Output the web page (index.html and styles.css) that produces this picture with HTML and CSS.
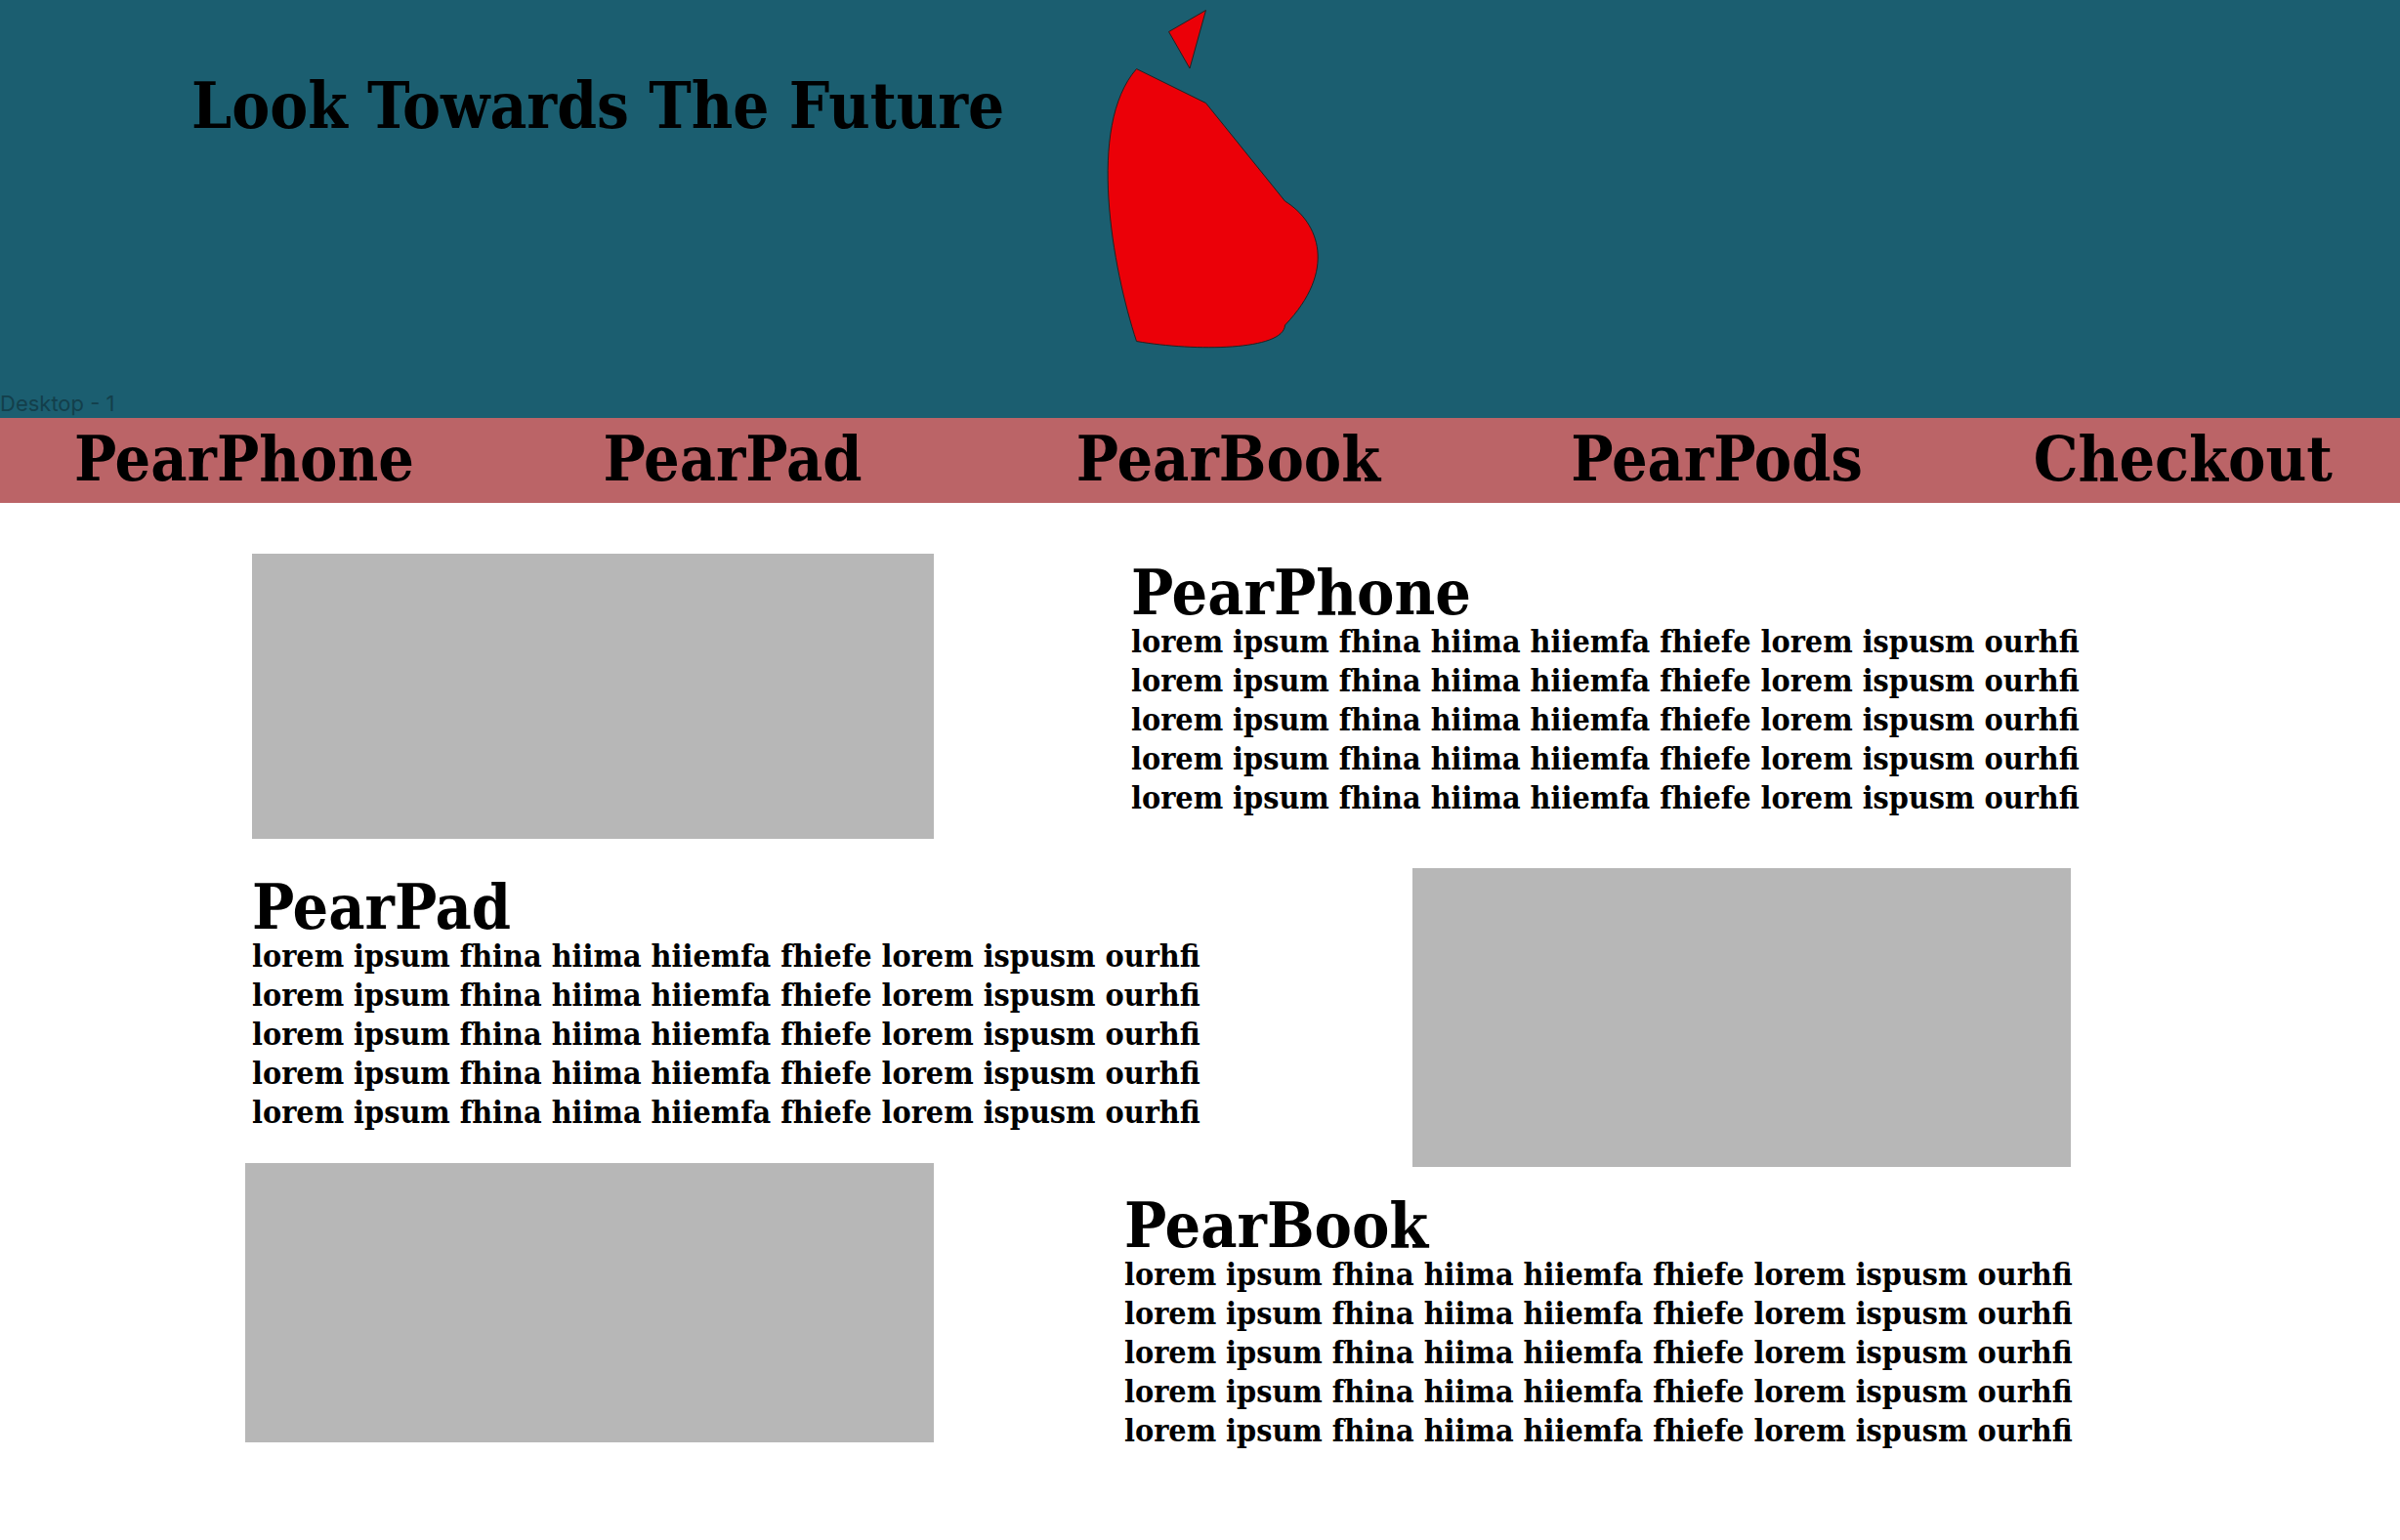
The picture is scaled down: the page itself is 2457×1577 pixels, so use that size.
FILE: index.html
```html
<!DOCTYPE html>
<html lang="en">
<head>
<meta charset="utf-8">
<meta name="viewport" content="width=device-width, initial-scale=1">
<title>Pear</title>
<link rel="stylesheet" href="styles.css">
</head>
<body>
<header class="hero">
  <h1 class="hero-title">Look Towards The Future</h1>
  <svg class="logo" viewBox="0 0 220 350" role="img" aria-label="Pear logo">
    <path d="M67.500 32.500 L105.500 10.500 L89 70 Z"/>
    <path d="M34.500 70.500 L105.500 105.500 L186.500 206 C222 228 240 277 186.500 333 C185 359 95 360 34.500 349.500 C10 275 -17 129 34.500 70.500 Z"/>
  </svg>
  <p class="frame-label">Desktop - 1</p>
</header>
<nav class="nav">
  <a href="#pearphone">PearPhone</a>
  <a href="#pearpad">PearPad</a>
  <a href="#pearbook">PearBook</a>
  <a href="#pearpods">PearPods</a>
  <a href="#checkout">Checkout</a>
</nav>
<main class="products">
  <div class="picture picture-phone"></div>
  <section class="copy copy-phone" id="pearphone">
    <h2>PearPhone</h2>
    <p>lorem ipsum fhina hiima hiiemfa fhiefe lorem ispusm ourhfi<br>
    lorem ipsum fhina hiima hiiemfa fhiefe lorem ispusm ourhfi<br>
    lorem ipsum fhina hiima hiiemfa fhiefe lorem ispusm ourhfi<br>
    lorem ipsum fhina hiima hiiemfa fhiefe lorem ispusm ourhfi<br>
    lorem ipsum fhina hiima hiiemfa fhiefe lorem ispusm ourhfi</p>
  </section>
  <section class="copy copy-pad" id="pearpad">
    <h2>PearPad</h2>
    <p>lorem ipsum fhina hiima hiiemfa fhiefe lorem ispusm ourhfi<br>
    lorem ipsum fhina hiima hiiemfa fhiefe lorem ispusm ourhfi<br>
    lorem ipsum fhina hiima hiiemfa fhiefe lorem ispusm ourhfi<br>
    lorem ipsum fhina hiima hiiemfa fhiefe lorem ispusm ourhfi<br>
    lorem ipsum fhina hiima hiiemfa fhiefe lorem ispusm ourhfi</p>
  </section>
  <div class="picture picture-pad"></div>
  <div class="picture picture-book"></div>
  <section class="copy copy-book" id="pearbook">
    <h2>PearBook</h2>
    <p>lorem ipsum fhina hiima hiiemfa fhiefe lorem ispusm ourhfi<br>
    lorem ipsum fhina hiima hiiemfa fhiefe lorem ispusm ourhfi<br>
    lorem ipsum fhina hiima hiiemfa fhiefe lorem ispusm ourhfi<br>
    lorem ipsum fhina hiima hiiemfa fhiefe lorem ispusm ourhfi<br>
    lorem ipsum fhina hiima hiiemfa fhiefe lorem ispusm ourhfi</p>
  </section>
</main>
</body>
</html>
```
FILE: styles.css
```css
* {
  box-sizing: border-box;
}

body {
  margin: 0;
  background: #fff;
  color: #000;
  font-family: "DejaVu Serif Condensed", "DejaVu Serif", serif;
  font-weight: 700;
}

h1,
h2,
p {
  margin: 0;
}

h1,
h2,
.nav a {
  font-size: 64px;
  line-height: 80px;
  font-weight: 700;
  white-space: nowrap;
}

.hero {
  display: grid;
  grid-template-columns: 1129fr 1328fr;
  grid-template-rows: 400px 28px;
  background: #1b5e70;
}

.hero-title {
  padding: 68px 0 0 196px;
  font-size: 65px;
}

.logo {
  width: 220px;
  height: 350px;
  overflow: visible;
  fill: #eb0008;
  stroke: #222;
  stroke-width: 1;
}

.frame-label {
  grid-column: 1 / -1;
  color: #133f4b;
  font: 400 22px/26px Inter, sans-serif;
}

.nav {
  display: grid;
  grid-template-columns: 541fr 484fr 506fr 473fr 375fr;
  padding: 2px 0 5px 76px;
  background: #bb6467;
}

.nav a {
  color: inherit;
  text-decoration: none;
}

.products {
  display: grid;
  grid-template-columns: 251fr 7fr 698fr 195fr 7fr 288fr 674fr 337fr;
  grid-template-rows: 322px 302px 4px 282px;
  padding: 52px 0 100px;
}

.picture {
  background: #b7b7b7;
}

.picture-phone {
  grid-area: 1 / 3 / 2 / 4;
  margin-bottom: 30px;
}

.picture-pad {
  grid-area: 2 / 7 / 4 / 8;
}

.picture-book {
  grid-area: 3 / 2 / 5 / 4;
}

.copy {
  min-width: 0;
}

.copy h2 {
  margin-bottom: -10px;
}

.copy p {
  font-size: 32px;
  line-height: 40px;
  white-space: nowrap;
}

.copy-phone {
  grid-area: 1 / 6 / 2 / 8;
}

.copy-pad {
  grid-area: 2 / 3 / 3 / 7;
}

.copy-book {
  grid-area: 4 / 5 / 5 / 8;
  padding-top: 20px;
}
```
